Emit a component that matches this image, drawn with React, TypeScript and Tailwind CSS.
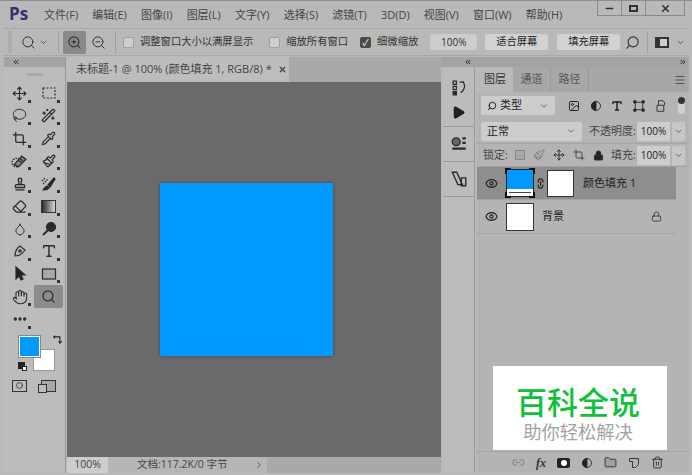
import {
  ChevronDown,
  ChevronRight,
  ChevronsLeft,
  ChevronsRight,
  Circle,
  Crop,
  Droplet,
  Eraser,
  Eye,
  Folder,
  Hand,
  Image,
  Lasso,
  Link2,
  Lock,
  Menu,
  Minus,
  Move,
  MoreHorizontal,
  Paintbrush,
  Pipette,
  Play,
  Search,
  Stamp,
  Trash2,
  Type,
  Wand2,
  X,
  ZoomIn,
  ZoomOut,
} from "lucide-react";
import type { ReactNode } from "react";

const menus = ["文件(F)", "编辑(E)", "图像(I)", "图层(L)", "文字(Y)", "选择(S)", "滤镜(T)", "3D(D)", "视图(V)", "窗口(W)", "帮助(H)"];

const Svg = ({ children, size = 16 }: { children: ReactNode; size?: number }) => (
  <svg width={size} height={size} viewBox="0 0 16 16" fill="none" stroke="#2a2a2a" strokeWidth="1.2">
    {children}
  </svg>
);

const tools: ReactNode[] = [
  <Move size={15} strokeWidth={1.8} />,
  <Svg><rect x="2" y="3" width="12" height="10" strokeDasharray="2 1.5" /></Svg>,
  <Lasso size={15} strokeWidth={1.5} />,
  <Wand2 size={15} strokeWidth={2} />,
  <Crop size={15} strokeWidth={2} />,
  <Pipette size={15} strokeWidth={1.8} />,
  <Svg size={17}><circle cx="5" cy="9" r="4" strokeDasharray="1.5 1" /><path d="M3 11 10 3l4 3-7 7z" fill="#8a8a8a" /><path d="M7 7l3 2M8.5 5.5l3 2" /></Svg>,
  <Paintbrush size={14} strokeWidth={2} />,
  <Stamp size={14} strokeWidth={2.4} />,
  <Svg><path d="M2 14c1-2 2-3 4-4l2 2c-1 1-3 2-6 2z" fill="#2a2a2a" /><path d="M7 9l6-7 1 1-5 8z" fill="#2a2a2a" /><path d="M2 8l5-5M1 5l3-3" strokeDasharray="1.5 1" /></Svg>,
  <Eraser size={15} strokeWidth={1.8} />,
  <svg width="15" height="13" viewBox="0 0 15 13"><defs><linearGradient id="grad"><stop stopColor="#222" /><stop offset="1" stopColor="#ddd" /></linearGradient></defs><rect x="0.5" y="0.5" width="14" height="12" fill="url(#grad)" stroke="#333" /></svg>,
  <Droplet size={14} strokeWidth={1.6} />,
  <Svg><circle cx="10" cy="6" r="4.5" fill="#2a2a2a" /><path d="M7 9 2 14" strokeWidth="2" /></Svg>,
  <Svg><path d="M3 13c0-4 2-8 5-10l5 4c-2 3-6 6-10 6z" /><circle cx="8" cy="8" r="1.2" /></Svg>,
  <Type size={16} strokeWidth={2.2} />,
  <Svg><path d="M4 1v12l3-3 2 4 2-1-2-4h4z" fill="#222" /></Svg>,
  <Svg><rect x="1.5" y="3" width="13" height="10" fill="#a8a8a8" /></Svg>,
  <Hand size={16} strokeWidth={1.6} />,
  <Search size={15} strokeWidth={2} />,
  <MoreHorizontal size={16} strokeWidth={3} />,
];

const Check = ({ on, label }: { on?: boolean; label: string }) => (
  <div className="flex items-center gap-[6px] whitespace-nowrap">
    <span className={`w-[11px] h-[11px] rounded-[2px] flex items-center justify-center text-[9px] leading-none ${on ? "bg-[#4a4a4a] text-white" : "bg-[#cfcfcf] border border-[#a0a0a0]"}`}>
      {on ? "✓" : ""}
    </span>
    <span>{label}</span>
  </div>
);

const OptButton = ({ label, w }: { label: string; w: string }) => (
  <div className={`${w} h-[16px] bg-[#d2d2d2] rounded-[2px] flex items-center justify-center text-[#222]`}>{label}</div>
);

const TitleBar = () => (
  <div className="h-[28px] flex items-start shrink-0 border-t border-[#8f8f8f]">
    <div className="w-[44px] pl-[9px] pt-[1px] text-[#35306f] text-[17px] font-bold leading-[24px]">Ps</div>
    <div className="flex gap-[14.1px] pt-[7px] text-[11px] leading-[14px] text-[#444]">
      {menus.map((m) => (
        <span key={m}>{m}</span>
      ))}
    </div>
    <div className="ml-auto mr-[7px] flex h-[15px] border border-t-0 border-[#8a8a8a] text-[#333]">
      <div className="w-[24px] flex items-center justify-center border-r border-[#8a8a8a]"><Minus size={11} strokeWidth={3} /></div>
      <div className="w-[24px] flex items-center justify-center border-r border-[#8a8a8a]"><span className="w-[9px] h-[7px] border-2 border-[#333]" /></div>
      <div className="w-[38px] flex items-center justify-center"><X size={11} strokeWidth={3.5} /></div>
    </div>
  </div>
);

const OptionsBar = () => (
  <div className="h-[28px] ml-[3px] mr-[3px] shrink-0 flex items-center border-t border-b border-[#a8a8a8] text-[10.3px] text-[#333]">
    <div className="w-[4px] h-[22px] ml-[5px] bg-[#adadad]" />
    <div className="ml-[9px] flex items-center gap-[3px]">
      <Search size={15} strokeWidth={1.6} />
      <ChevronDown size={9} />
    </div>
    <div className="w-px h-[22px] bg-[#a0a0a0] ml-[10px]" />
    <div className="ml-[4px] w-[23px] h-[23px] bg-[#8a8a8a] rounded-[2px] flex items-center justify-center"><ZoomIn size={15} strokeWidth={1.8} /></div>
    <div className="ml-[4px] w-[16px] flex justify-center"><ZoomOut size={15} strokeWidth={1.6} /></div>
    <div className="w-px h-[22px] bg-[#a0a0a0] ml-[9px]" />
    <div className="ml-[7px]"><Check label="调整窗口大小以满屏显示" /></div>
    <div className="ml-[16px]"><Check label="缩放所有窗口" /></div>
    <div className="ml-[12px]"><Check on label="细微缩放" /></div>
    <div className="ml-[12px] w-[47px] h-[16px] bg-[#cdcdcd] rounded-[2px] flex items-center justify-center text-[10px]">100%</div>
    <div className="ml-[8px]"><OptButton label="适合屏幕" w="w-[63px]" /></div>
    <div className="ml-[9px]"><OptButton label="填充屏幕" w="w-[63px]" /></div>
    <div className="ml-[5px]"><Search size={15} strokeWidth={1.8} className="-scale-x-100" /></div>
    <div className="w-px h-[22px] bg-[#a0a0a0] ml-[7px]" />
    <div className="ml-[7px] w-[14px] h-[11px] border-2 border-[#333] bg-[#cfcfcf] flex"><span className="w-[3px] bg-[#333]" /></div>
    <ChevronDown size={9} className="ml-[7px]" />
  </div>
);

const Tools = () => (
  <div className="w-[62px] ml-[4px] flex flex-col bg-[#bcbcbc] border-r border-[#9a9a9a]">
    <div className="h-[10px] bg-[#a3a3a3] flex items-center pl-[8px] text-[#333]"><ChevronsLeft size={8} strokeWidth={3} /></div>
    <div className="h-[14px] flex justify-center items-center"><span className="w-[16px] h-[3px] bg-[#a8a8a8]" /></div>
    <div className="grid grid-cols-[29px_29px] auto-rows-[22.6px] pl-[1px] pt-[1px]">
      {tools.map((t, i) => (
        <div key={i} className={`relative flex items-center justify-center text-[#2a2a2a] rounded-[2px] ${i === 19 ? "bg-[#8b8b8b]" : ""}`}>
          {t}
          {i !== 19 && i !== 16 && <span className="absolute right-[3px] bottom-[2px] w-[3px] h-[3px] bg-[#333]" />}
        </div>
      ))}
    </div>
    <div className="flex mt-[5px] pl-[12px] h-[46px]">
      <div className="relative w-[36px] h-[36px] -ml-[1px]">
        <div className="absolute left-[18px] top-[13px] w-[22px] h-[22px] bg-white border border-[#999]" />
        <div className="absolute left-[4px] top-0 w-[21px] h-[21px] bg-[#0099ff] border border-white outline outline-[#888]" />
        <div className="absolute left-[3px] top-[26px] w-[7px] h-[7px] bg-[#222]" />
        <div className="absolute left-[7px] top-[30px] w-[5px] h-[5px] bg-white border border-[#222]" />
      </div>
      <span className="ml-[2px] -mt-[1px]">
        <Svg size={10}><path d="M1 3h10v10M9 10l2 3 3-3M3 1 1 3l2 2" strokeWidth="1.8" /></Svg>
      </span>
    </div>
    <div className="flex items-center pl-[8px] gap-[14px] -mt-[2px]">
      <span className="w-[15px] h-[12px] border border-[#333] flex items-center justify-center"><Circle size={7} /></span>
      <span className="relative w-[15px] h-[12px] border border-[#333] bg-[#a8a8a8]">
        <span className="absolute -left-[4px] top-[3px] w-[9px] h-[9px] border border-[#333] bg-[#bcbcbc]" />
      </span>
    </div>
  </div>
);

const Document = () => (
  <div className="w-[374px] ml-[1px] flex flex-col">
    <div className="h-[25px] shrink-0 flex bg-[#a9a9a9]">
      <div className="w-[222px] bg-[#bdbdbd] flex items-center pl-[9px] gap-[6px] text-[11px] text-[#444] whitespace-nowrap">
        <span>未标题-1 @ 100% (颜色填充 1, RGB/8) *</span>
        <X size={9} strokeWidth={3.5} />
      </div>
    </div>
    <div className="flex-1 bg-[#6a6a6a] pl-[93px] pt-[101px]">
      <div className="w-[173px] h-[173px] bg-[#0099ff] shadow-[0_0_3px_#444]" />
    </div>
    <div className="h-[16px] shrink-0 flex items-center text-[10.5px] text-[#444] bg-[#a9a9a9]">
      <div className="w-[41px] h-full bg-[#cdcdcd] flex items-center justify-center">100%</div>
      <div className="w-[159px] h-full bg-[#b6b6b6] pl-[29px] pr-[3px] flex items-center justify-between whitespace-nowrap">
        <span>文档:117.2K/0 字节</span>
        <ChevronRight size={10} strokeWidth={2} />
      </div>
    </div>
  </div>
);

const Dock = () => (
  <div className="w-[32px] ml-[2px] flex flex-col bg-[#bcbcbc] border-r border-[#9a9a9a]">
    <div className="h-[60px] flex flex-col items-center pt-[12px] gap-[9px] border-b border-[#9a9a9a]">
      <Svg size={17}><path d="M3 2h3v3H3zM3 7h3v3H3z" /><path d="M3 12h3v3H3z" fill="#222" /><path d="M9 3h4M12 2c3 4 2 8-2 11" /></Svg>
      <Play size={15} fill="#222" strokeWidth={1} />
    </div>
    <div className="h-[35px] flex items-center justify-center border-b border-[#9a9a9a]">
      <Svg size={18}><circle cx="5.5" cy="6" r="3.5" fill="#666" /><path d="M11 3h3M11 7h3M2 12h12" strokeWidth="2" /></Svg>
    </div>
    <div className="h-[35px] flex items-center justify-center border-b border-[#9a9a9a]">
      <Svg size={18}><path d="M2 2h4l5 11H7z" /><path d="M10 7h4v7h-4z" /></Svg>
    </div>
  </div>
);

const Dropdown = ({ w, children }: { w: string; children: ReactNode }) => (
  <div className={`${w} h-[19px] bg-[#cdcdcd] rounded-[2px] flex items-center justify-between px-[6px] text-[11px] text-[#222]`}>
    {children}
    <ChevronDown size={10} className="text-[#555]" />
  </div>
);

const PercentField = () => (
  <div className="flex ml-[1px]">
    <span className="w-[33px] h-[19px] bg-[#cdcdcd] flex items-center justify-center text-[10px] text-[#222]">100%</span>
    <span className="w-[13px] h-[19px] ml-[2px] bg-[#c6c6c6] flex items-center justify-center"><ChevronDown size={9} /></span>
  </div>
);

const LayerRow = ({ active, name, h, children, trailing }: { active?: boolean; name: string; h: string; children: ReactNode; trailing?: ReactNode }) => (
  <div className={`${h} flex items-center ${active ? "bg-[#8e8e8e]" : "bg-[#b4b4b4]"} border-b border-[#a4a4a4]`}>
    <div className="w-[29px] flex justify-center"><Eye size={13} strokeWidth={2.2} className="text-[#222]" /></div>
    {children}
    <span className="text-[11px] text-[#222] whitespace-nowrap">{name}</span>
    {trailing}
  </div>
);

const LayersPanel = () => (
  <div className="w-[212px] ml-[2px] flex flex-col bg-[#b4b4b4]">
    <div className="h-[25px] shrink-0 flex items-end bg-[#a7a7a7] text-[11px] text-[#555]">
      <span className="w-[36px] h-[25px] bg-[#b9b9b9] flex items-center justify-center text-[#333]">图层</span>
      <span className="w-[38px] h-[25px] flex items-center justify-center border-r border-[#999]">通道</span>
      <span className="w-[38px] h-[25px] flex items-center justify-center border-r border-[#999]">路径</span>
      <Menu size={12} className="ml-auto mr-[3px] mb-[6px]" />
    </div>
    <div className="h-[27px] shrink-0 flex items-center pl-[4px] text-[#222]">
      <Dropdown w="w-[74px]"><span className="flex items-center gap-[3px]"><Search size={10} strokeWidth={2.4} className="-scale-x-100" />类型</span></Dropdown>
      <div className="ml-[13px] flex items-center gap-[9.5px]">
        <Image size={12} strokeWidth={2} />
        <Svg size={12}><circle cx="8" cy="8" r="6" /><path d="M8 2a6 6 0 0 0 0 12z" fill="#222" /></Svg>
        <Type size={12} strokeWidth={3} />
        <Svg size={12}><rect x="3" y="3" width="10" height="10" /><path d="M1 1h3v3H1zM12 1h3v3h-3zM1 12h3v3H1zM12 12h3v3h-3z" fill="#222" /></Svg>
        <Svg size={12}><path d="M4 7h9v8H4z" /><path d="M6 7V1h6l2 2v4" /></Svg>
      </div>
      <div className="ml-[12px] w-[7px] h-[17px] rounded-full bg-[#cfcfcf] relative"><span className="absolute top-0 left-0 w-[7px] h-[7px] rounded-full bg-[#333]" /></div>
    </div>
    <div className="h-[25px] shrink-0 flex items-center pl-[4px] border-b border-[#a4a4a4] text-[11px] text-[#444] whitespace-nowrap">
      <Dropdown w="w-[101px]"><span>正常</span></Dropdown>
      <span className="ml-[7px] w-[47px]">不透明度:</span>
      <PercentField />
    </div>
    <div className="h-[23px] shrink-0 flex items-center pl-[6px] border-b border-[#a4a4a4] text-[11px] text-[#444] whitespace-nowrap">
      <span className="w-[27px]">锁定:</span>
      <div className="flex items-center gap-[8px] ml-[5px] text-[#333]">
        <span className="w-[10px] h-[10px] border border-[#888] bg-[#a8a8a8]" />
        <Paintbrush size={12} className="text-[#777]" />
        <Move size={12} strokeWidth={2} />
        <Crop size={12} strokeWidth={1.6} />
        <Lock size={11} fill="#222" strokeWidth={2} />
      </div>
      <span className="ml-[7px] w-[25px]">填充:</span>
      <PercentField />
    </div>
    <div className="flex flex-col w-[199px] bg-[#b4b4b4]">
      <LayerRow active h="h-[33px]" name="颜色填充 1">
        <div className="relative w-[28px] h-[28px] border border-[#222] flex flex-col bg-white">
          <div className="h-[19px] bg-[#0099ff]" />
          <div className="h-[1px] mt-[3px] mx-[2px] bg-[#444]" />
          <span className="absolute -left-[2px] -top-[2px] w-[6px] h-[6px] border-l-2 border-t-2 border-[#111]" />
          <span className="absolute -right-[2px] -top-[2px] w-[6px] h-[6px] border-r-2 border-t-2 border-[#111]" />
          <span className="absolute -left-[2px] -bottom-[2px] w-[6px] h-[6px] border-l-2 border-b-2 border-[#111]" />
          <span className="absolute -right-[2px] -bottom-[2px] w-[6px] h-[6px] border-r-2 border-b-2 border-[#111]" />
        </div>
        <Link2 size={11} strokeWidth={2.5} className="mx-[1px] rotate-90 text-[#222]" />
        <div className="w-[27px] h-[27px] bg-white border border-[#333] mr-[9px]" />
      </LayerRow>
      <LayerRow
        h="h-[34px]"
        name="背景"
        trailing={<Lock size={11} strokeWidth={1.8} className="ml-auto mr-[14px] text-[#333]" />}
      >
        <div className="w-[28px] h-[28px] bg-white border border-[#333] mr-[8px]" />
      </LayerRow>
    </div>
    <div className="flex-1" />
    <div className="h-[22px] shrink-0 flex items-center border-t border-[#a4a4a4] pl-[35px] gap-[11px] text-[#333]">
      <Link2 size={13} className="text-[#888]" />
      <span className="font-['Liberation_Serif',serif] italic font-bold text-[12px] leading-none">fx</span>
      <span className="w-[13px] h-[10px] bg-[#222] rounded-[2px] flex items-center justify-center"><span className="w-[6px] h-[6px] bg-white rounded-full" /></span>
      <Svg size={12}><circle cx="8" cy="8" r="6" /><path d="M8 2a6 6 0 0 0 0 12z" fill="#222" /></Svg>
      <Folder size={13} strokeWidth={1.8} fill="#a0a0a0" />
      <Svg size={12}><path d="M2 2h12v8l-4 4H6V6H2z" /></Svg>
      <Trash2 size={13} strokeWidth={1.8} />
    </div>
  </div>
);

export default function App() {
  return (
    <div className="relative w-[692px] h-[475px] overflow-hidden bg-[#b9b9b9] flex flex-col font-['Open_Sans','Noto_Sans_CJK_SC',sans-serif]">
      <TitleBar />
      <OptionsBar />
      <div className="flex h-[416px] mt-[1px]">
        <Tools />
        <Document />
        <div className="flex flex-col ml-[2px] w-[246px]">
          <div className="h-[10px] shrink-0 bg-[#a3a3a3] flex items-center justify-between text-[#333] px-[2px] -ml-[2px] w-[248px]">
            <ChevronsLeft size={8} strokeWidth={3} className="ml-[21px]" />
            <ChevronsRight size={8} strokeWidth={3} />
          </div>
          <div className="flex flex-1 -ml-[2px]">
            <Dock />
            <LayersPanel />
          </div>
        </div>
      </div>
      <div className="absolute left-[493px] top-[366px] w-[174px] h-[84px] bg-white flex flex-col items-center pt-[18px] pr-[4px] gap-[3px] font-['Noto_Sans_CJK_SC',sans-serif]">
        <span className="text-[31px] leading-[33px] font-medium text-[#11c13c]">百科全说</span>
        <span className="text-[18.3px] leading-[22px] text-[#a3a3a3]">助你轻松解决</span>
      </div>
    </div>
  );
}
